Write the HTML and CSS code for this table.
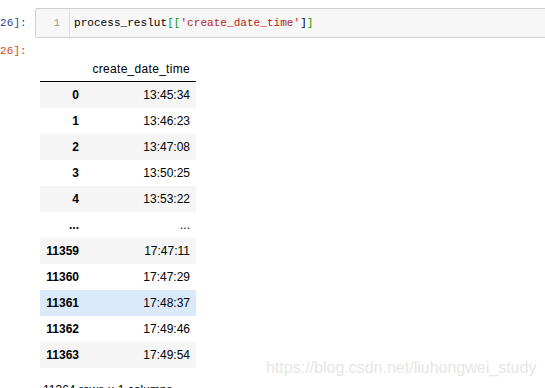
FILE: index.html
```html
<!DOCTYPE html>
<html lang="en">
<head>
  <meta charset="UTF-8">
  <title>Notebook - process_reslut</title>
  <link rel="stylesheet" href="styles.css">
</head>
<body>
  <div class="notebook">
    <div class="cell input-cell">
      <div class="prompt prompt-in">26]:</div>
      <div class="editor">
        <div class="gutter">1</div>
        <pre class="code">process_reslut<span class="bracket-match">[[</span><span class="string">'create_date_time'</span>]<span class="bracket-match">]</span></pre>
      </div>
    </div>

    <div class="prompt prompt-out">26]:</div>

    <div class="output-area">
      <table class="dataframe">
        <colgroup>
          <col class="col-index">
          <col class="col-value">
        </colgroup>
        <thead>
          <tr>
            <th></th>
            <th>create_date_time</th>
          </tr>
        </thead>
        <tbody>
          <tr><th>0</th><td>13:45:34</td></tr>
          <tr><th>1</th><td>13:46:23</td></tr>
          <tr><th>2</th><td>13:47:08</td></tr>
          <tr><th>3</th><td>13:50:25</td></tr>
          <tr><th>4</th><td>13:53:22</td></tr>
          <tr><th>...</th><td>...</td></tr>
          <tr><th>11359</th><td>17:47:11</td></tr>
          <tr><th>11360</th><td>17:47:29</td></tr>
          <tr class="hover"><th>11361</th><td>17:48:37</td></tr>
          <tr><th>11362</th><td>17:49:46</td></tr>
          <tr><th>11363</th><td>17:49:54</td></tr>
        </tbody>
      </table>
      <p class="shape">11364 rows × 1 columns</p>
    </div>

    <div class="watermark">https://blog.csdn.net/liuhongwei_study</div>
  </div>
</body>
</html>
```

FILE: styles.css
```css
:root {
  --prompt-in: #303f9f;
  --prompt-out: #d84315;
  --editor-bg: #f7f7f7;
  --editor-border: #cfcfcf;
  --row-alt: #f5f5f5;
  --row-hover: #dbeafa;
  --text-color: #000;
}

* {
  margin: 0;
  padding: 0;
  box-sizing: border-box;
}

html, body {
  background-color: white;
  overflow: hidden;
}

body {
  color: var(--text-color);
}

.notebook {
  position: relative;
  height: 388px;
  padding-top: 8px;
}

/* Prompts */
.prompt {
  font-family: "Liberation Mono", "DejaVu Sans Mono", monospace;
  font-size: 11px;
  letter-spacing: 0.1px;
  line-height: 14px;
  white-space: nowrap;
}

.prompt-in {
  width: 35px;
  padding-top: 8px;
  color: var(--prompt-in);
}

.prompt-out {
  margin-top: 6px;
  color: var(--prompt-out);
}

/* Input cell */
.input-cell {
  display: flex;
}

.editor {
  flex: 1;
  display: flex;
  height: 30px;
  margin-right: -4px;
  background-color: var(--editor-bg);
  border: 1px solid var(--editor-border);
  border-radius: 2px;
}

.gutter {
  width: 34px;
  padding-right: 9px;
  text-align: right;
  border-right: 1px solid #dddddd;
  color: #999999;
  font-family: "Liberation Mono", "DejaVu Sans Mono", monospace;
  font-size: 11px;
  line-height: 28px;
}

.code {
  padding-left: 4px;
  font-family: "Liberation Mono", "DejaVu Sans Mono", monospace;
  font-size: 11px;
  letter-spacing: 0.05px;
  line-height: 28px;
}

.bracket-match {
  color: #0b9b0b;
}

.string {
  color: #ba2121;
}

/* DataFrame output */
.output-area {
  padding-left: 40px;
}

.dataframe {
  width: 156px;
  table-layout: fixed;
  border-collapse: collapse;
  font-family: "Liberation Sans", Arial, sans-serif;
  font-size: 12px;
  line-height: 14px;
}

.col-index {
  width: 45px;
}

.col-value {
  width: 111px;
}

.dataframe th,
.dataframe td {
  text-align: right;
  padding: 6px 6px 6px 0;
  white-space: nowrap;
}

.dataframe thead th {
  font-weight: normal;
  padding-top: 4px;
  padding-bottom: 5px;
  border-bottom: 1px solid black;
  letter-spacing: 0.3px;
}

.dataframe tbody th {
  font-weight: bold;
}

.dataframe tbody tr:nth-child(odd) {
  background-color: var(--row-alt);
}

.dataframe tbody tr.hover {
  background-color: var(--row-hover);
}

.shape {
  margin-top: 15px;
  padding-left: 3px;
  font-family: "Liberation Sans", Arial, sans-serif;
  font-size: 12px;
  line-height: 14px;
}

/* Blog watermark laid over the page */
.watermark {
  position: absolute;
  left: 266px;
  top: 359px;
  font-family: "Liberation Sans", Arial, sans-serif;
  font-size: 16px;
  color: #e6e6e6;
  white-space: nowrap;
}
```
